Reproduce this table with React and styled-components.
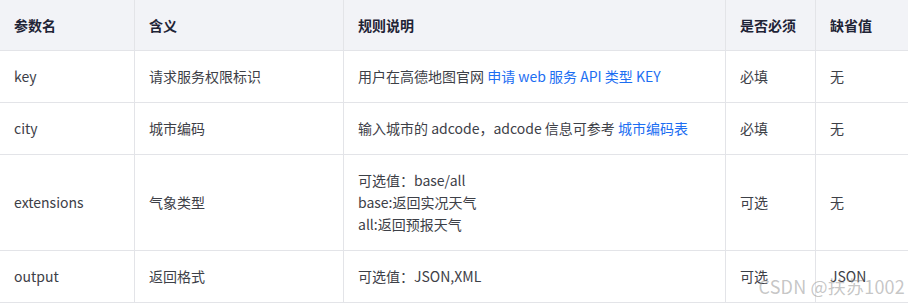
import React from "react";
import styled, { createGlobalStyle } from "styled-components";

const GlobalStyles = createGlobalStyle`
  html, body {
    margin: 0;
    padding: 0;
    background: #ffffff;
    font-family: "Noto Sans CJK SC", "Noto Sans", sans-serif;
  }
  *, *::before, *::after {
    box-sizing: border-box;
  }
`;

const Page = styled.div`
  position: relative;
  width: 908px;
  height: 305px;
  overflow: hidden;
  background: #fff;
`;

const Table = styled.table`
  border-collapse: collapse;
  table-layout: fixed;
  margin: -1px 0 0 -1px;
  width: 909px;
  font-size: 14px;
  line-height: 22px;
  color: #3d4047;
`;

const Th = styled.th`
  width: ${props => props.$w}px;
  background: #f2f3f7;
  border: 1px solid #e3e4e8;
  padding: 14px 14px;
  text-align: left;
  font-weight: 700;
  color: #1f2436;
`;

const Td = styled.td`
  border: 1px solid #e3e4e8;
  padding: 14px 14px 15px;
  vertical-align: middle;
`;

const Link = styled.a`
  color: #1c6ef2;
  text-decoration: none;
`;

const Watermark = styled.div`
  position: absolute;
  right: 3px;
  bottom: 7px;
  font-family: "Noto Sans CJK SC", "Liberation Sans", sans-serif;
  font-size: 18px;
  line-height: 24px;
  color: rgba(150, 150, 150, 0.55);
  letter-spacing: 0.2px;
`;

const columns = [
  { label: "参数名", w: 135 },
  { label: "含义", w: 209 },
  { label: "规则说明", w: 382 },
  { label: "是否必须", w: 90 },
  { label: "缺省值", w: 93 },
];

export default function App() {
  return (
    <Page>
      <GlobalStyles />
      <Table>
        <thead>
          <tr>
            {columns.map(c => (
              <Th key={c.label} $w={c.w}>{c.label}</Th>
            ))}
          </tr>
        </thead>
        <tbody>
          <tr>
            <Td>key</Td>
            <Td>请求服务权限标识</Td>
            <Td>
              用户在高德地图官网 <Link>申请 web 服务 API 类型 KEY</Link>
            </Td>
            <Td>必填</Td>
            <Td>无</Td>
          </tr>
          <tr>
            <Td>city</Td>
            <Td>城市编码</Td>
            <Td>
              输入城市的 adcode，adcode 信息可参考 <Link>城市编码表</Link>
            </Td>
            <Td>必填</Td>
            <Td>无</Td>
          </tr>
          <tr>
            <Td>extensions</Td>
            <Td>气象类型</Td>
            <Td>
              可选值：base/all
              <br />
              base:返回实况天气
              <br />
              all:返回预报天气
            </Td>
            <Td>可选</Td>
            <Td>无</Td>
          </tr>
          <tr>
            <Td>output</Td>
            <Td>返回格式</Td>
            <Td>可选值：JSON,XML</Td>
            <Td>可选</Td>
            <Td>JSON</Td>
          </tr>
        </tbody>
      </Table>
      <Watermark>CSDN @扶苏1002</Watermark>
    </Page>
  );
}
